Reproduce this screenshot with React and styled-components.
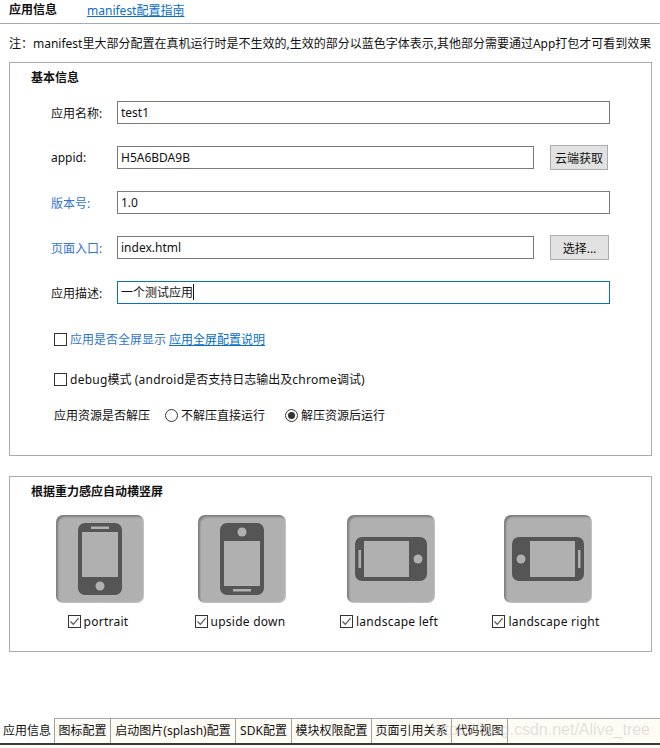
import React from "react";
import styled, { createGlobalStyle } from "styled-components";

const Global = createGlobalStyle`
  html, body { margin: 0; padding: 0; background: #fff; }
  body { font-family: "Noto Sans", "Noto Sans CJK SC", sans-serif; font-size: 12px; color: #111; }
`;

const Page = styled.div`
  position: relative;
  width: 660px;
  height: 748px;
  overflow: hidden;
  display: flex;
  flex-direction: column;
`;
const Header = styled.div`
  border-bottom: 1px solid #a9a9a9;
  box-sizing: content-box;
  display: flex;
  align-items: center;
  padding: 0 0 3px 9px;
  height: 20px;
  gap: 30px;
`;
const HeaderTitle = styled.span`
  font-weight: 700;
  line-height: 20px;
`;
const Link = styled.a`
  color: #0a6ecb;
  text-decoration: underline;
`;
const Note = styled.div`
  height: 38px;
  line-height: 40px;
  padding-left: 9px;
  white-space: nowrap;
`;
const Panel = styled.section`
  margin: ${(p) => p.$top}px 8px 0 9px;
  height: ${(p) => p.$height}px;
  border: 1px solid #aaabaf;
  box-sizing: border-box;
  display: flex;
  flex-direction: column;
`;
const PanelTitle = styled.h3`
  margin: 0;
  padding: 7px 0 0 21px;
  font-size: 12px;
  line-height: 16px;
  font-weight: 700;
`;
const Rows = styled.div`
  display: flex;
  flex-direction: column;
  gap: 22px;
  padding: 15px 0 0 41px;
`;
const Row = styled.div`
  display: flex;
  align-items: center;
  height: 23px;
`;
const Label = styled.label`
  width: 66px;
  flex: none;
  color: ${(p) => (p.$live ? "#2f74d0" : "#111")};
`;
const Field = styled.div`
  box-sizing: border-box;
  width: ${(p) => p.$width}px;
  height: 23px;
  border: 1px solid ${(p) => (p.$focus ? "#0a6ecb" : "#7a7a7a")};
  padding-left: 3px;
  line-height: 21px;
  white-space: nowrap;
`;
const Caret = styled.span`
  display: inline-block;
  width: 1px;
  height: 16px;
  background: #111;
  vertical-align: -3px;
`;
const Button = styled.button`
  box-sizing: border-box;
  margin-left: 16px;
  width: ${(p) => p.$width}px;
  height: 25px;
  padding: 0;
  border: 1px solid #adadad;
  background: #e1e1e1;
  color: #111;
  font: inherit;
`;
const Options = styled.div`
  display: flex;
  flex-direction: column;
  padding: 0 0 0 44px;
`;
const CheckLine = styled.div`
  display: flex;
  align-items: center;
  height: 16px;
  margin-top: ${(p) => p.$top}px;
  gap: 3px;
  color: ${(p) => (p.$live ? "#2f74d0" : "#111")};
`;
const Latin = styled.span`
  letter-spacing: 0.25px;
`;
const InlineLink = styled(Link)`
  margin-left: 3px;
`;
const Box = styled.span`
  box-sizing: border-box;
  width: 13px;
  height: 13px;
  flex: none;
  border: 1px solid #333;
  background: #fff;
  display: inline-flex;
  align-items: center;
  justify-content: center;
`;
const RadioLine = styled.div`
  display: flex;
  align-items: center;
  height: 16px;
  margin-top: 20px;
`;
const RadioItem = styled.span`
  display: inline-flex;
  align-items: center;
  gap: 3px;
  margin-left: ${(p) => p.$left}px;
`;
const Radio = styled.span`
  box-sizing: border-box;
  width: 13px;
  height: 13px;
  border-radius: 50%;
  border: 1px solid #333;
  display: inline-flex;
  align-items: center;
  justify-content: center;
  &::after {
    content: "";
    display: ${(p) => (p.$on ? "block" : "none")};
    width: 7px;
    height: 7px;
    border-radius: 50%;
    background: #333;
  }
`;
const Tiles = styled.div`
  display: flex;
  padding-top: 15px;
`;
const TileCol = styled.div`
  width: 88px;
  margin-left: ${(p) => p.$left}px;
  flex: none;
  display: flex;
  flex-direction: column;
  align-items: center;
`;
const Tile = styled.div`
  width: 88px;
  height: 88px;
  border-radius: 7px;
  background: #b0b0b0;
  box-shadow: inset 2px 2px 2px rgba(0, 0, 0, 0.28), inset -1px -1px 1px rgba(255, 255, 255, 0.25);
  display: flex;
  align-items: center;
  justify-content: center;
`;
const TileLabel = styled.div`
  display: flex;
  align-items: center;
  gap: 3px;
  margin-top: 10px;
  height: 16px;
  white-space: nowrap;
  letter-spacing: 0.25px;
  position: relative;
  left: -2px;
`;
const Spacer = styled.div`
  flex: 1;
`;
const TabBar = styled.nav`
  height: 27px;
  border-top: 1px solid #a9a9a9;
  border-bottom: 2px solid #3a3a3a;
  box-sizing: border-box;
  background: #fffbf5;
  display: flex;
`;
const Tab = styled.div`
  box-sizing: border-box;
  border-right: 1px solid #a0a0a0;
  line-height: 24px;
  height: ${(p) => (p.$active ? 25 : 24)}px;
  margin-top: ${(p) => (p.$active ? -1 : 0)}px;
  padding-top: ${(p) => (p.$active ? 1 : 0)}px;
  white-space: nowrap;
  background: ${(p) => (p.$active ? "#fff" : "transparent")};
  width: ${(p) => p.$width}px;
  text-align: center;
`;
const Footer = styled.div`
  height: 3px;
  background: #fffbf5;
`;
const Watermark = styled.div`
  position: absolute;
  right: 10px;
  top: 720px;
  font-family: "Liberation Sans", sans-serif;
  font-size: 16px;
  line-height: 20px;
  color: rgba(190, 190, 190, 0.45);
  white-space: nowrap;
`;

const CheckBox = ({ on }) => (
  <Box>
    {on && (
      <svg width="11" height="11" viewBox="0 0 11 11" fill="none">
        <path d="M1.5 5.5 L4.3 8.3 L9.6 2.2" stroke="#555" strokeWidth="1.2" />
      </svg>
    )}
  </Box>
);

const phoneBody = "#555555";
const screen = "#b0b0b0";

const PhoneIcon = ({ kind }) => {
  const rot = { portrait: 0, upside: 180, left: -90, right: 90 }[kind];
  return (
    <svg width="72" height="72" viewBox="0 0 72 72">
      <g transform={`rotate(${rot} 36 36)`}>
        <rect x="14" y="0" width="44" height="72" rx="7" fill={phoneBody} />
        <rect x="18" y="9" width="36" height="45" fill={screen} />
        <rect x="27" y="3.5" width="18" height="2.5" fill={screen} />
        <circle cx="36" cy="63" r="4.5" fill={screen} />
      </g>
    </svg>
  );
};

const tiles = [
  { kind: "portrait", left: 46, label: "portrait" },
  { kind: "upside", left: 54, label: "upside down" },
  { kind: "left", left: 61, label: "landscape left" },
  { kind: "right", left: 69, label: "landscape right" },
];

export default function App() {
  return (
    <Page>
      <Global />
      <Header>
        <HeaderTitle>应用信息</HeaderTitle>
        <Link>manifest配置指南</Link>
      </Header>
      <Note>注：manifest里大部分配置在真机运行时是不生效的,生效的部分以蓝色字体表示,其他部分需要通过App打包才可看到效果</Note>
      <Panel $top={0} $height={394}>
        <PanelTitle>基本信息</PanelTitle>
        <Rows>
          <Row>
            <Label>应用名称:</Label>
            <Field $width={493}>test1</Field>
          </Row>
          <Row>
            <Label>appid:</Label>
            <Field $width={417}>H5A6BDA9B</Field>
            <Button $width={58}>云端获取</Button>
          </Row>
          <Row>
            <Label $live>版本号:</Label>
            <Field $width={493}>1.0</Field>
          </Row>
          <Row>
            <Label $live>页面入口:</Label>
            <Field $width={417}>index.html</Field>
            <Button $width={59}>选择...</Button>
          </Row>
          <Row>
            <Label>应用描述:</Label>
            <Field $width={493} $focus>
              一个测试应用
              <Caret />
            </Field>
          </Row>
        </Rows>
        <Options>
          <CheckLine $top={27} $live>
            <CheckBox />
            <span>
              应用是否全屏显示
              <InlineLink>应用全屏配置说明</InlineLink>
            </span>
          </CheckLine>
          <CheckLine $top={24}>
            <CheckBox />
            <span>
              <Latin>debug</Latin>模式 <Latin>(android</Latin>是否支持日志输出及<Latin>chrome</Latin>调试)
            </span>
          </CheckLine>
          <RadioLine>
            <span>应用资源是否解压</span>
            <RadioItem $left={15}>
              <Radio />
              不解压直接运行
            </RadioItem>
            <RadioItem $left={20}>
              <Radio $on />
              解压资源后运行
            </RadioItem>
          </RadioLine>
        </Options>
      </Panel>
      <Panel $top={20} $height={176}>
        <PanelTitle>根据重力感应自动横竖屏</PanelTitle>
        <Tiles>
          {tiles.map((t) => (
            <TileCol key={t.kind} $left={t.left}>
              <Tile>
                <PhoneIcon kind={t.kind} />
              </Tile>
              <TileLabel>
                <CheckBox on />
                {t.label}
              </TileLabel>
            </TileCol>
          ))}
        </Tiles>
      </Panel>
      <Spacer />
      <TabBar>
        <Tab $active $width={55}>应用信息</Tab>
        <Tab $width={56}>图标配置</Tab>
        <Tab $width={125}>启动图片(splash)配置</Tab>
        <Tab $width={56}>SDK配置</Tab>
        <Tab $width={80}>模块权限配置</Tab>
        <Tab $width={80}>页面引用关系</Tab>
        <Tab $width={56}>代码视图</Tab>
      </TabBar>
      <Footer />
      <Watermark>https://blog.csdn.net/Alive_tree</Watermark>
    </Page>
  );
}
